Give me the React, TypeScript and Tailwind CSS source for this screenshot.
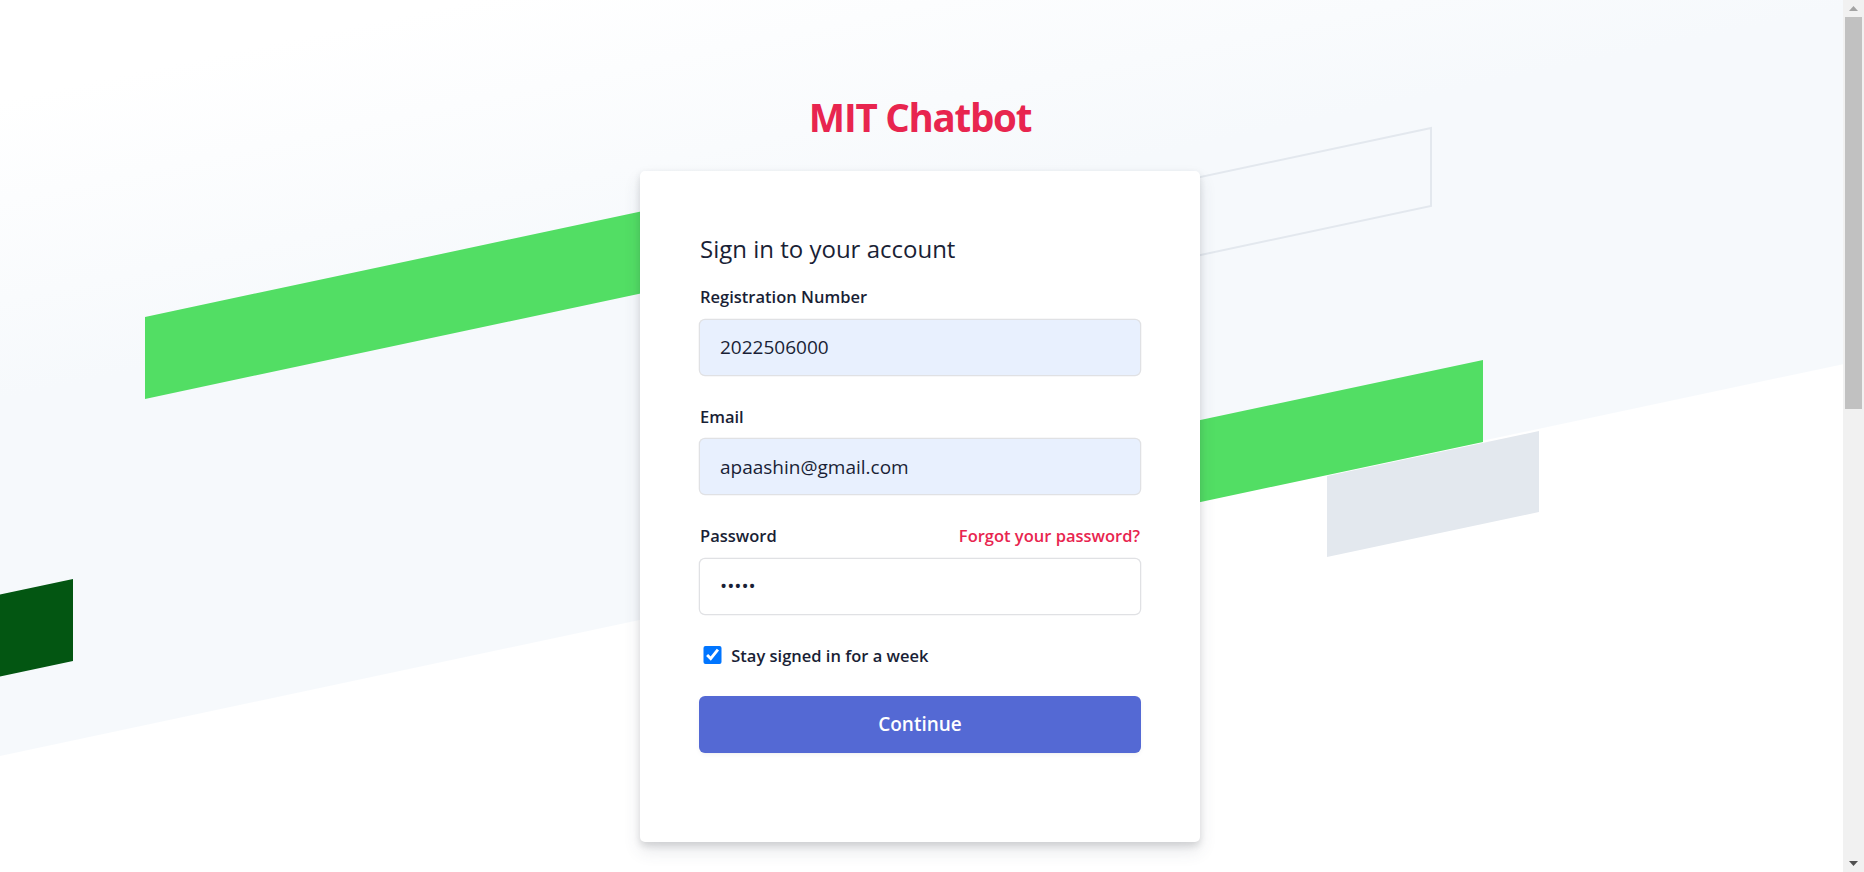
import React from 'react';

const S = 0.2126; // tan(12deg), the slant of every band

function Backdrop() {
  const band = (x1: number, x2: number, yRight: number, h: number) => {
    const yLeft = yRight + (x2 - x1) * S;
    return `${x1},${yLeft} ${x2},${yRight} ${x2},${yRight + h} ${x1},${yLeft + h}`;
  };

  return (
    <svg
      className="absolute left-0 top-0 pointer-events-none"
      width={1844}
      height={900}
      viewBox="0 0 1844 900"
      aria-hidden
    >
      <defs>
        <linearGradient id="bandFade" gradientUnits="userSpaceOnUse" x1="0" y1="100" x2="61" y2="387">
          <stop offset="0" stopColor="#ffffff" />
          <stop offset="1" stopColor="#f6f9fc" />
        </linearGradient>
      </defs>
      <polygon points="0,0 1844,0 1844,364 0,756" fill="url(#bandFade)" />
      {/* outline box behind the card */}
      <polygon points={band(1000, 1431, 128, 78)} fill="none" stroke="#e3e8ee" strokeWidth={2} />
      {/* left green */}
      <polygon points={band(145, 800, 177.7, 82)} fill="#52de64" />
      {/* dark green at the edge */}
      <polygon points={band(-20, 73, 579, 82)} fill="#035612" />
      {/* grey block under the right green */}
      <polygon points={band(1327, 1539, 431, 81)} fill="#e3e8ee" />
      {/* right green */}
      <polygon points={band(1000, 1483, 360, 82)} fill="#52de64" />
    </svg>
  );
}

function Scrollbar() {
  return (
    <div className="flex w-[21px] shrink-0 flex-col bg-[#f1f1f1]">
      <div className="flex h-[17px] items-center justify-center">
        <svg width="9" height="5" viewBox="0 0 9 5">
          <polygon points="0,5 4.5,0 9,5" fill="#a3a3a3" />
        </svg>
      </div>
      <div className="mx-[2px] h-[392px] bg-[#c1c1c1]" />
      <div className="flex-1" />
      <div className="flex h-[17px] items-center justify-center">
        <svg width="9" height="5" viewBox="0 0 9 5">
          <polygon points="0,0 9,0 4.5,5" fill="#505050" />
        </svg>
      </div>
    </div>
  );
}

function Field({ label, children }: { label: React.ReactNode; children: React.ReactNode }) {
  return (
    <div className="pb-[30px]">
      {label}
      {children}
    </div>
  );
}

const labelCls = 'mb-[11.5px] block text-[16.5px] leading-[23px] font-semibold text-[#1a1f36]';
const inputCls =
  'block w-full h-[55px] rounded-[5px] px-[20px] text-[19px] leading-[35px] text-[#1a1f36] outline-none shadow-[0_0_0_1.25px_rgba(60,66,87,0.16)]';

export default function App() {
  return (
    <div className="flex h-screen overflow-hidden bg-white [font-family:'Open_Sans',sans-serif]">
      <main className="relative flex-1 overflow-hidden">
        <Backdrop />

        <div className="relative flex flex-col items-center pt-[93px] pr-[3px]">
          <h1 className="text-[38.5px] leading-[48px] font-bold tracking-[-1.25px] text-[#e8254f]">
            MIT Chatbot
          </h1>

          <div className="mt-[30px] w-[560px] rounded-[5px] bg-white p-[60px] shadow-[0_9px_17.5px_0_rgba(60,66,87,0.12),0_3.75px_7.5px_0_rgba(0,0,0,0.12)]">
            <span className="block pb-[19px] text-[24px] leading-[35px] text-[#1a1f36]">
              Sign in to your account
            </span>

            <form onSubmit={(e) => e.preventDefault()}>
              <Field label={<label className={labelCls}>Registration Number</label>}>
                <input className={`${inputCls} bg-[#e8f0fe]`} defaultValue="2022506000" />
              </Field>

              <Field label={<label className={labelCls}>Email</label>}>
                <input type="email" className={`${inputCls} bg-[#e8f0fe]`} defaultValue="apaashin@gmail.com" />
              </Field>

              <Field
                label={
                  <div className="grid grid-cols-2 items-center">
                    <label className={labelCls}>Password</label>
                    <a href="#" className="mb-[11.5px] block text-right text-[16.5px] leading-[23px] font-semibold text-[#e8254f]">
                      Forgot your password?
                    </a>
                  </div>
                }
              >
                <input type="password" className={`${inputCls} bg-white`} defaultValue="admin" />
              </Field>

              <div className="pb-[30px]">
                <label className="flex items-center text-[16.5px] leading-[23px] font-semibold text-[#1a1f36]">
                  <input type="checkbox" defaultChecked className="mr-[6.25px] h-[18.75px] w-[25px] accent-[#0075ff]" />
                  Stay signed in for a week
                </label>
              </div>

              <div className="pb-[30px]">
                <button
                  type="submit"
                  className="block h-[55px] w-full rounded-[5px] bg-[#5469d4] text-[19px] font-semibold text-white shadow-[0_0_0_1px_#5469d4,0_1px_1px_0_rgba(0,0,0,0.12),0_2px_5px_0_rgba(60,66,87,0.08)]"
                >
                  Continue
                </button>
              </div>
            </form>
          </div>
        </div>
      </main>
      <Scrollbar />
    </div>
  );
}
